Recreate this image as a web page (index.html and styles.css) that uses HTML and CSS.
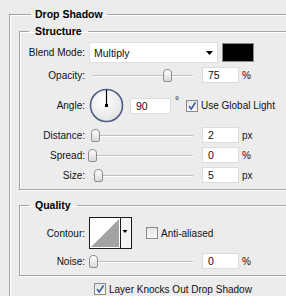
FILE: index.html
```html
<!DOCTYPE html>
<html lang="en">
<head>
    <meta charset="UTF-8">
    <title>Drop Shadow</title>
    <link rel="stylesheet" href="styles.css">
</head>
<body>

<fieldset class="group outer">
    <legend class="caption outer-caption">Drop Shadow</legend>

    <fieldset class="group">
        <legend class="caption">Structure</legend>

        <div class="row blend-row">
            <span class="label">Blend Mode:</span>
            <div class="select">
                <span>Multiply</span>
                <svg class="arrow" width="7" height="4" viewBox="0 0 7 4"><polygon points="0,0 7,0 3.5,4" fill="#000"/></svg>
            </div>
            <span class="swatch"></span>
        </div>

        <div class="row">
            <span class="label">Opacity:</span>
            <div class="slider"><span class="track"></span><span class="thumb" style="left: 75px"></span></div>
            <span class="field">75</span>
            <span class="unit">%</span>
        </div>

        <div class="row angle-row">
            <span class="label">Angle:</span>
            <svg class="dial" width="35" height="35" viewBox="0 0 35 35">
                <defs>
                    <radialGradient id="dialFill" cx="0.4" cy="0.35" r="0.7">
                        <stop offset="0" stop-color="#ffffff"/>
                        <stop offset="1" stop-color="#e2e2e2"/>
                    </radialGradient>
                </defs>
                <circle cx="17.5" cy="17.5" r="16" fill="url(#dialFill)" stroke="#4d5d85" stroke-width="1.6"/>
                <line x1="17.5" y1="2" x2="17.5" y2="17.5" stroke="#000" stroke-width="1.2"/>
                <rect x="16" y="16" width="3" height="3" fill="#000"/>
            </svg>
            <span class="field angle-field">90</span>
            <span class="degree">°</span>
            <span class="check checked global">
                <svg width="10" height="10" viewBox="0 0 10 10"><polyline points="2,5 4.2,8 8.5,1.5" fill="none" stroke="#3a5fa8" stroke-width="1.6"/></svg>
            </span>
            <span class="check-text">Use Global Light</span>
        </div>

        <div class="row">
            <span class="label">Distance:</span>
            <div class="slider"><span class="track"></span><span class="thumb" style="left: 3px"></span></div>
            <span class="field">2</span>
            <span class="unit">px</span>
        </div>

        <div class="row">
            <span class="label">Spread:</span>
            <div class="slider"><span class="track"></span><span class="thumb" style="left: 0px"></span></div>
            <span class="field">0</span>
            <span class="unit">%</span>
        </div>

        <div class="row">
            <span class="label">Size:</span>
            <div class="slider"><span class="track"></span><span class="thumb" style="left: 6px"></span></div>
            <span class="field">5</span>
            <span class="unit">px</span>
        </div>
    </fieldset>

    <fieldset class="group quality">
        <legend class="caption">Quality</legend>

        <div class="row contour-row">
            <span class="label">Contour:</span>
            <svg class="contour" width="43" height="32" viewBox="0 0 43 32">
                <rect x="0.5" y="0.5" width="42" height="31" fill="#fff" stroke="#1a1a1a"/>
                <polygon points="2,30 30,2 30,30" fill="#a3a3a3"/>
                <line x1="31.5" y1="1" x2="31.5" y2="31" stroke="#1a1a1a"/>
                <rect x="32" y="1" width="10" height="30" fill="#f4f4f4"/>
                <polygon points="33.5,13 38.5,13 36,16" fill="#000"/>
            </svg>
            <span class="check anti"></span>
            <span class="check-text">Anti-aliased</span>
        </div>

        <div class="row">
            <span class="label">Noise:</span>
            <div class="slider"><span class="track"></span><span class="thumb" style="left: 1px"></span></div>
            <span class="field">0</span>
            <span class="unit">%</span>
        </div>
    </fieldset>

    <div class="knock-row">
        <span class="check checked">
            <svg width="10" height="10" viewBox="0 0 10 10"><polyline points="2,5 4.2,8 8.5,1.5" fill="none" stroke="#3a5fa8" stroke-width="1.6"/></svg>
        </span>
        <span class="check-text">Layer Knocks Out Drop Shadow</span>
    </div>
</fieldset>

</body>
</html>
```

FILE: styles.css
```css
body {
    margin: 0;
    padding-top: 8px;
    height: 296px;
    box-sizing: border-box;
    overflow: hidden;
    background-color: #ececec;
    color: #111;
    font-family: "Liberation Sans", Arial, sans-serif;
    font-size: 10px;
}
.group {
    margin: 0;
    padding: 0;
    min-width: 0;
    border: 1px solid #a3a3a3;
    border-right: none;
    box-shadow: inset 1px 1px 0 #fff, 1px 1px 0 #fff;
}
.outer {
    margin-left: 9px;
    height: 288px;
    padding-left: 9px;
    box-sizing: border-box;
    border-bottom: none;
}
.group .group {
    margin-top: 4px;
    padding-bottom: 6px;
}
.group .quality {
    margin-top: 9px;
}
.caption {
    margin-left: 9px;
    padding: 0 6px;
    font-size: 10.5px;
    font-weight: bold;
    line-height: 13px;
    color: #000;
}
.outer-caption {
    margin-left: 12px;
    padding: 0 4px;
}
.row {
    display: flex;
    align-items: center;
    height: 16px;
    margin-top: 4px;
}
.label {
    width: 65px;
    text-align: right;
    flex-shrink: 0;
}
.blend-row {
    height: 21px;
}
.select {
    display: flex;
    align-items: center;
    justify-content: space-between;
    box-sizing: border-box;
    width: 129px;
    height: 21px;
    margin-left: 4px;
    padding: 0 4px 0 4px;
    background-color: #fff;
    border: 1px solid #dedede;
    font-size: 10.5px;
}
.arrow {
    margin-top: 1px;
}
.swatch {
    width: 32px;
    height: 19px;
    margin-left: 4px;
    box-sizing: border-box;
    background-color: #000;
    border: 1px solid #8a8a8a;
}
.slider {
    position: relative;
    width: 110px;
    height: 16px;
    margin-left: 3px;
}
.track {
    position: absolute;
    left: 5px;
    right: 5px;
    top: 8px;
    height: 1px;
    background-color: #bdbdbd;
    border-bottom: 1px solid #fff;
}
.thumb {
    position: absolute;
    top: 2px;
    width: 9px;
    height: 13px;
    box-sizing: border-box;
    border: 1px solid #8e8e8e;
    border-radius: 4px 4px 2px 2px;
    background: linear-gradient(#ffffff, #d9d9d9);
}
.field {
    box-sizing: border-box;
    width: 37px;
    height: 16px;
    margin-left: 4px;
    padding-left: 5px;
    line-height: 14px;
    background-color: #fff;
    border: 1px solid #dcdcdc;
    font-size: 10.5px;
}
.unit {
    margin-left: 3px;
}
.angle-row {
    height: 35px;
    margin-top: 5px;
}
.dial {
    margin-left: 4px;
}
.angle-field {
    width: 41px;
    margin-left: 6px;
}
.degree {
    align-self: flex-start;
    margin-top: 7px;
    margin-left: 4px;
}
.check {
    display: flex;
    align-items: center;
    justify-content: center;
    box-sizing: border-box;
    width: 12px;
    height: 12px;
    border: 1px solid #8a8a8a;
    background: linear-gradient(#e6e6e6, #fafafa);
    flex-shrink: 0;
}
.global {
    margin-left: 7px;
}
.check-text {
    margin-left: 3px;
}
.contour-row {
    height: 32px;
    margin-top: 5px;
}
.contour {
    margin-left: 4px;
}
.anti {
    margin-left: 14px;
}
.knock-row {
    display: flex;
    align-items: center;
    margin-top: 7px;
    margin-left: 75px;
}
```
